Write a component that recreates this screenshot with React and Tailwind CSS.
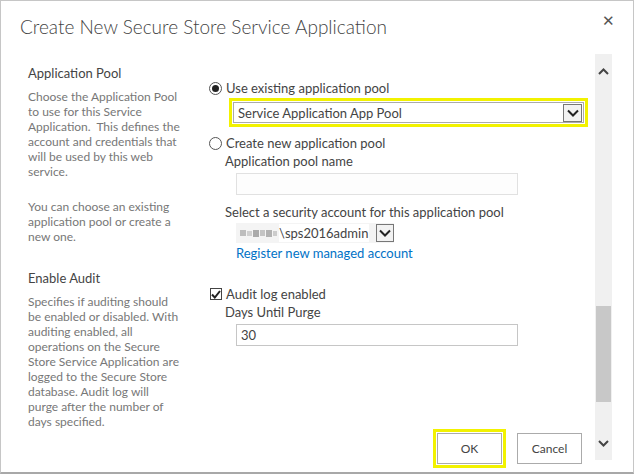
import React from 'react'

const FONT = { fontFamily: 'Lato, "Noto Sans", Arial, sans-serif' }

function Chevron({ up, className = '' }) {
  return (
    <svg width="11" height="7" viewBox="0 0 11 7" className={className}>
      <polyline
        points={up ? '1,6 5.5,1.5 10,6' : '1,1 5.5,5.5 10,1'}
        fill="none"
        stroke="#444"
        strokeWidth="2"
      />
    </svg>
  )
}

function Radio({ checked }) {
  return (
    <span className="w-[13px] h-[13px] rounded-full border border-[#555] bg-white flex items-center justify-center shrink-0">
      {checked && <span className="w-[7px] h-[7px] rounded-full bg-[#222]" />}
    </span>
  )
}

function DropArrow({ size = 'lg' }) {
  return (
    <span
      className={`flex items-center justify-center border border-[#777] bg-[#f2f2f2] shrink-0 ${
        size === 'lg' ? 'w-[19px] h-[18px]' : 'w-[18px] h-[18px]'
      }`}>
      <svg width="12" height="8" viewBox="0 0 12 8">
        <polyline points="1,1.5 6,6.5 11,1.5" fill="none" stroke="#222" strokeWidth="2" />
      </svg>
    </span>
  )
}

function SideBlock({ title, children, className = '' }) {
  return (
    <div className={className}>
      <p className="text-[13px] leading-[18px] text-[#444]">{title}</p>
      <div className="mt-[7px] text-[12px] leading-[15px] text-[#777]">{children}</div>
    </div>
  )
}

export default function App() {
  return (
    <div
      style={FONT}
      className="w-[634px] h-[474px] bg-white border border-[#c6c6c6] border-b-2 border-b-[#a8a8a8] flex flex-col overflow-hidden">
      {/* Title bar */}
      <div className="h-[53px] shrink-0 flex items-start justify-between pl-[19px] pr-[18px]">
        <h1 className="mt-[13px] text-[19px] leading-[26px] font-light text-[#444]">
          Create New Secure Store Service Application
        </h1>
        <button className="mt-[9px] text-[#555] text-[15px] leading-[20px]">✕</button>
      </div>

      <div className="flex flex-1 min-h-0">
        <div className="flex-1 flex flex-col">
          <div className="flex">
            {/* Left descriptions */}
            <div className="w-[180px] pl-[27px] pt-[10px] shrink-0">
              <SideBlock title="Application Pool">
                <p>
                  Choose the Application Pool to use for this Service Application.&nbsp; This defines the
                  account and credentials that will be used by this web service.
                </p>
                <p className="mt-[20px]">You can choose an existing application pool or create a new one.</p>
              </SideBlock>
              <SideBlock title="Enable Audit" className="mt-[25px]">
                <p>
                  Specifies if auditing should be enabled or disabled. With auditing enabled, all operations on
                  the Secure Store Service Application are logged to the Secure Store database. Audit log will
                  purge after the number of days specified.
                </p>
              </SideBlock>
            </div>

            {/* Form controls */}
            <div className="flex-1 pl-[28px] pt-[25px] text-[13px] leading-[18px] text-[#444]">
              <label className="flex items-center gap-[4px]">
                <Radio checked />
                <span>Use existing application pool</span>
              </label>
              <div className="ml-[20px] mt-[1px] w-[359px] h-[29px] border-[3px] border-[#f2f200] p-[1px]">
                <div className="h-full border border-[#ababab] bg-white flex items-center justify-between pl-[4px] pr-[1px]">
                  <span>Service Application App Pool</span>
                  <DropArrow />
                </div>
              </div>
              <label className="flex items-center gap-[4px] mt-[7px]">
                <Radio />
                <span>Create new application pool</span>
              </label>
              <p className="ml-[16px]">Application pool name</p>
              <div className="ml-[27px] mt-[3px] w-[282px] h-[22px] border border-[#e1e1e1] bg-[#fdfdfd]" />
              <p className="ml-[16px] mt-[8px]">Select a security account for this application pool</p>
              <div className="ml-[27px] mt-[2px] w-[158px] h-[20px] flex items-center bg-[#f4f4f4]">
                <span className="flex items-center gap-[1px] pl-[4px] blur-[0.5px]">
                  <span className="w-[6px] h-[6px] bg-[#bdbdbd]" />
                  <span className="w-[5px] h-[5px] bg-[#d0d0d0]" />
                  <span className="w-[6px] h-[7px] bg-[#aaaaaa]" />
                  <span className="w-[5px] h-[6px] bg-[#c4c4c4]" />
                  <span className="w-[6px] h-[7px] bg-[#b2b2b2]" />
                  <span className="w-[4px] h-[5px] bg-[#cccccc]" />
                </span>
                <span className="ml-[2px] text-[#444] bg-white pr-[1px]">\sps2016admin</span>
                <span className="ml-auto">
                  <DropArrow size="sm" />
                </span>
              </div>
              <a className="block ml-[27px] mt-[1px] text-[#0072c6]">Register new managed account</a>

              <label className="flex items-center gap-[4px] mt-[23px] ml-[1px]">
                <span className="w-[12px] h-[12px] border border-[#444] flex items-center justify-center shrink-0">
                  <svg width="10" height="9" viewBox="0 0 10 9">
                    <polyline points="1,4.5 3.8,7.5 9,1" fill="none" stroke="#222" strokeWidth="2" />
                  </svg>
                </span>
                <span>Audit log enabled</span>
              </label>
              <p className="ml-[16px]">Days Until Purge</p>
              <div className="ml-[27px] mt-[3px] w-[282px] h-[22px] border border-[#c6c6c6] bg-white flex items-center pl-[4px]">
                30
              </div>
            </div>
          </div>

          {/* Footer buttons */}
          <div className="mt-auto mb-[9px] flex justify-end gap-[11px] pr-[13px] text-[12px] text-[#444]">
            <div className="border-[3px] border-[#f2f200] p-[1px]">
              <button className="w-[65px] h-[31px] border border-[#ababab] bg-white">OK</button>
            </div>
            <div className="pt-[4px]">
              <button className="w-[65px] h-[31px] border border-[#ababab] bg-white">Cancel</button>
            </div>
          </div>
        </div>

        {/* Scrollbar */}
        <div className="w-[17px] mr-[21px] mb-[12px] bg-[#f0f0f0] flex flex-col items-center shrink-0">
          <div className="h-[34px] flex items-center justify-center">
            <Chevron up />
          </div>
          <div className="flex-1 w-full flex flex-col">
            <div className="flex-1" />
            <div className="h-[96px] mx-[1px] bg-[#c8c8c8]" />
            <div className="h-[24px]" />
          </div>
          <div className="h-[34px] flex items-center justify-center">
            <Chevron />
          </div>
        </div>
      </div>
    </div>
  )
}
